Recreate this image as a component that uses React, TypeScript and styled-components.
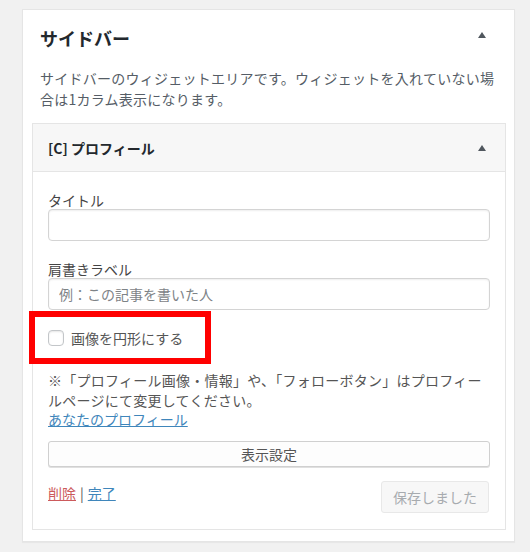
import React from "react";
import styled, { createGlobalStyle } from "styled-components";

const GlobalStyle = createGlobalStyle`
  html, body {
    margin: 0;
    padding: 0;
    background: #f1f1f1;
  }
  body {
    font-family: "Noto Sans CJK JP", "Noto Sans", sans-serif;
    color: #555d66;
  }
  *, *::before, *::after {
    box-sizing: border-box;
  }
`;

const Page = styled.div`
  padding: 9px 0 0 22px;
  min-height: 552px;
`;

const Card = styled.section`
  width: 493px;
  background: #fff;
  border: 1px solid #e5e5e5;
  box-shadow: 0 1px 1px rgba(0, 0, 0, 0.04);
  padding: 0 8px 11px 9px;
`;

const SectionHeader = styled.div`
  display: flex;
  align-items: center;
  justify-content: space-between;
  padding: 15px 14px 0 8px;
`;

const SectionTitle = styled.h2`
  margin: 0;
  font-size: 18px;
  line-height: 24px;
  font-weight: 700;
  color: #23282d;
`;

const ArrowBox = styled.span<{ $lift?: boolean }>`
  width: 20px;
  height: 20px;
  display: flex;
  align-items: center;
  justify-content: center;
  margin-bottom: ${(p) => (p.$lift ? "6px" : "0")};
  &::before {
    content: "";
    display: block;
    border-left: 4.5px solid transparent;
    border-right: 4.5px solid transparent;
    border-bottom: 6px solid #50575e;
  }
`;

const Description = styled.p`
  margin: 17px 0 13px;
  padding: 0 4px 0 8px;
  font-size: 14px;
  line-height: 21px;
  letter-spacing: 0.25px;
  color: #555d66;
`;

const Widget = styled.div`
  border: 1px solid #e5e5e5;
  background: #fff;
`;

const WidgetTop = styled.div`
  display: flex;
  align-items: center;
  justify-content: space-between;
  height: 48px;
  padding: 0 13px 0 15px;
  background: #f7f7f7;
  border-bottom: 1px solid #e5e5e5;
`;

const WidgetTitle = styled.h3`
  margin: 0;
  font-size: 14px;
  line-height: 20px;
  font-weight: 700;
  color: #23282d;
`;

const WidgetBody = styled.div`
  padding: 0 15px 16px 15px;
`;

const FieldLabel = styled.label<{ $gap: number }>`
  display: block;
  margin-top: ${(p) => p.$gap}px;
  font-size: 14px;
  line-height: 18px;
  color: #444;
`;

const TextInput = styled.input`
  display: block;
  width: 100%;
  height: 32px;
  margin: 0;
  padding: 0 10px;
  border: 1px solid #d4d4d4;
  border-radius: 4px;
  background: #fff;
  box-shadow: inset 0 1px 2px rgba(0, 0, 0, 0.07);
  font-family: inherit;
  font-size: 14px;
  color: #32373c;
  outline: none;
  &::placeholder {
    color: #7e8387;
  }
`;

const CheckRow = styled.label`
  position: relative;
  display: flex;
  align-items: center;
  gap: 7px;
  height: 20px;
  margin-top: 18px;
  font-size: 14px;
  line-height: 20px;
  color: #555;
`;

const Checkbox = styled.input`
  appearance: none;
  -webkit-appearance: none;
  width: 16px;
  height: 16px;
  margin: 0;
  border: 1px solid #c3c6c9;
  border-radius: 4px;
  background: #fff;
  box-shadow: inset 0 1px 2px rgba(0, 0, 0, 0.1);
`;

const RedFrame = styled.span`
  position: absolute;
  left: -19px;
  top: -17px;
  width: 182px;
  height: 53px;
  border: 6px solid #ff0000;
  pointer-events: none;
`;

const Note = styled.p`
  margin: 22px 0 0;
  font-size: 14px;
  line-height: 20px;
  letter-spacing: 0.25px;
  color: #555;
`;

const ProfileLink = styled.a`
  display: block;
  font-size: 14px;
  line-height: 18px;
  color: #3f86bb;
  text-decoration: underline;
`;

const WideButton = styled.button`
  display: block;
  width: 100%;
  height: 26px;
  margin: 13px 0 0;
  padding: 0;
  border: 1px solid #d0d0d0;
  border-radius: 3px;
  background: #fdfdfd;
  box-shadow: 0 1px 0 #e0e0e0;
  font-family: inherit;
  font-size: 14px;
  line-height: 24px;
  color: #555;
`;

const Actions = styled.div`
  display: flex;
  justify-content: space-between;
  align-items: flex-start;
  margin-top: 14px;
`;

const ActionLinks = styled.div`
  margin-top: 2px;
  font-size: 14px;
  line-height: 20px;
  color: #555;
`;

const ActionLink = styled.a<{ $danger?: boolean }>`
  color: ${(p) => (p.$danger ? "#cc5a5c" : "#3f86bb")};
  text-decoration: underline;
`;

const Separator = styled.span`
  margin: 0 4px;
`;

const SaveButton = styled.button`
  width: 108px;
  height: 32px;
  margin: 0 1px 0 0;
  padding: 0;
  border: 1px solid #e8e8e8;
  border-radius: 3px;
  background: #f7f7f7;
  font-family: inherit;
  font-size: 14px;
  color: #a7abaf;
`;

export default function App() {
  return (
    <>
      <GlobalStyle />
      <Page>
        <Card>
          <SectionHeader>
            <SectionTitle>サイドバー</SectionTitle>
            <ArrowBox $lift />
          </SectionHeader>
          <Description>
            サイドバーのウィジェットエリアです。ウィジェットを入れていない場合は1カラム表示になります。
          </Description>
          <Widget>
            <WidgetTop>
              <WidgetTitle>[C] プロフィール</WidgetTitle>
              <ArrowBox />
            </WidgetTop>
            <WidgetBody>
              <FieldLabel $gap={19}>タイトル</FieldLabel>
              <TextInput type="text" />
              <FieldLabel $gap={19}>肩書きラベル</FieldLabel>
              <TextInput type="text" placeholder="例：この記事を書いた人" />
              <CheckRow>
                <Checkbox type="checkbox" />
                画像を円形にする
                <RedFrame />
              </CheckRow>
              <Note>
                ※「プロフィール画像・情報」や、「フォローボタン」はプロフィールページにて変更してください。
              </Note>
              <ProfileLink href="#">あなたのプロフィール</ProfileLink>
              <WideButton type="button">表示設定</WideButton>
              <Actions>
                <ActionLinks>
                  <ActionLink href="#" $danger>
                    削除
                  </ActionLink>
                  <Separator>|</Separator>
                  <ActionLink href="#">完了</ActionLink>
                </ActionLinks>
                <SaveButton type="button" disabled>
                  保存しました
                </SaveButton>
              </Actions>
            </WidgetBody>
          </Widget>
        </Card>
      </Page>
    </>
  );
}
